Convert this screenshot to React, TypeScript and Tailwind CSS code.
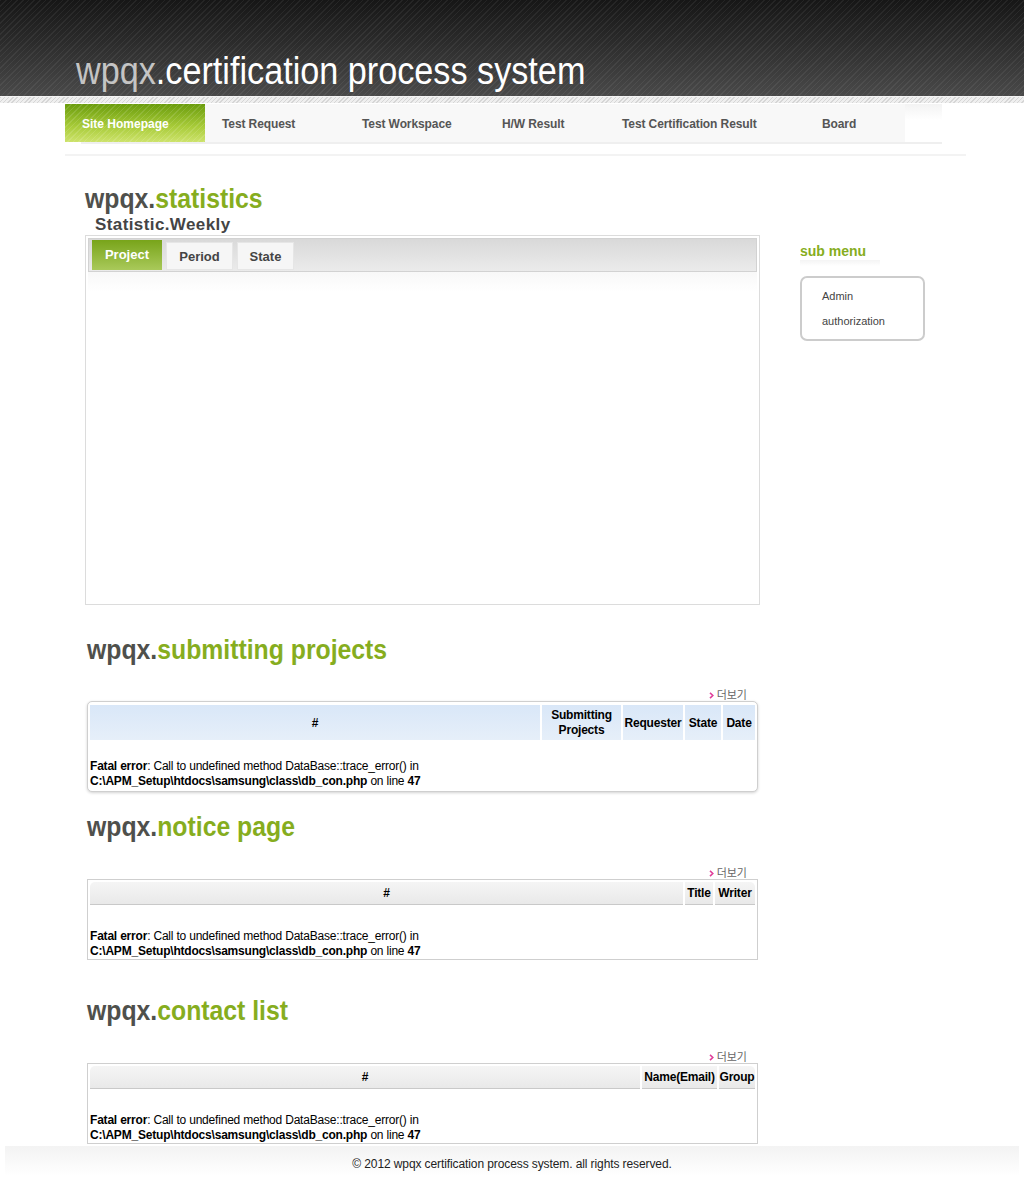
import React from 'react';

const NARROW = "font-['Liberation_Sans',Arial,sans-serif]";

const navItems = [
  { label: 'Test Request', w: 'w-[140px]' },
  { label: 'Test Workspace', w: 'w-[140px]' },
  { label: 'H/W Result', w: 'w-[120px]' },
  { label: 'Test Certification Result', w: 'w-[200px]' },
  { label: 'Board', w: 'w-[100px]' },
];

// section heading: grey prefix + green word
const Heading = ({ word, className = '' }: { word: string; className?: string }) => (
  <h2 className={`${NARROW} text-[28px] font-bold leading-none ${className}`}>
    <span className="inline-block origin-left scale-x-[0.885] whitespace-nowrap">
      <span className="text-[#4f504c]">wpqx.</span>
      <span className="text-[#86ad1e]">{word}</span>
    </span>
  </h2>
);

const More = () => (
  <div className="flex justify-end pr-[13px] h-[13px] items-center">
    <svg width="5" height="7" viewBox="0 0 5 7" className="mr-[3px] mt-[2px]">
      <path d="M1 0.8 L3.8 3.5 L1 6.2" fill="none" stroke="#e0409a" strokeWidth="1.6" />
    </svg>
    <span className="text-[11px] text-[#666] leading-none font-['Noto_Sans_CJK_KR',sans-serif]">더보기</span>
  </div>
);

const FatalError = () => (
  <div className={`${NARROW} text-[12px] leading-[15px] tracking-[-0.2px] text-black`}>
    <div>
      <b>Fatal error</b>: Call to undefined method DataBase::trace_error() in
    </div>
    <div>
      <b>{'C:\\APM_Setup\\htdocs\\samsung\\class\\db_con.php'}</b> on line <b>47</b>
    </div>
  </div>
);

type Col = { label: React.ReactNode; w: string };

const GreyTable = ({ cols }: { cols: Col[] }) => (
  <div className="border border-[#cfcfcf] bg-white h-[81px] pt-[2px] px-[2px]">
    <div className="flex gap-[2px]">
      {cols.map((c, i) => (
        <div
          key={i}
          className={`${c.w} h-[23px] flex items-center justify-center bg-[linear-gradient(#f5f5f5,#e9e9e9)] border-b border-[#c9c9c9] ${NARROW} text-[12px] font-bold tracking-[-0.2px] text-black ${i === cols.length - 1 ? 'rounded-tr-[5px]' : ''} ${i === 0 ? 'rounded-tl-[5px]' : ''}`}
        >
          {c.label}
        </div>
      ))}
    </div>
    <div className="pt-[24px]">
      <FatalError />
    </div>
  </div>
);

const App: React.FC = () => {
  return (
    <div className="w-[1024px] min-h-[1196px] bg-white font-['Liberation_Sans',Arial,sans-serif] text-[#333]">
      {/* header */}
      <header className="h-[96px] bg-[image:repeating-linear-gradient(135deg,rgba(255,255,255,0.06)_0px,rgba(255,255,255,0.06)_1px,transparent_1px,transparent_4px),linear-gradient(#161616,#2c2c2c_45%,#4a4a4a)] flex items-end pl-[76px] pb-[4px]">
        <h1 className={`${NARROW} text-[38px] leading-none pb-[2px]`}>
          <span className="inline-block origin-left scale-x-[0.9] whitespace-nowrap">
            <span className="text-[#c4c4c4]">wpqx</span>
            <span className="text-white">.certification process system</span>
          </span>
        </h1>
      </header>
      <div className="h-[7px] bg-[image:repeating-linear-gradient(135deg,#d6d6d6_0px,#d6d6d6_1px,#efefef_1px,#efefef_3px)] border-t border-[#f4f4f4]" />

      {/* navigation */}
      <nav className="pl-[65px] pt-[1px]">
        <div className="flex w-[877px] h-[38px]">
          <div className="w-[140px] h-full flex items-center pl-[17px] pt-[1px] bg-[image:repeating-linear-gradient(135deg,rgba(255,255,255,0.12)_0px,rgba(255,255,255,0.12)_1px,transparent_1px,transparent_4px),linear-gradient(#6a9c0c,#a9cc3a_60%,#cde36c)] text-white text-[12px] font-bold">
            Site Homepage
          </div>
          {navItems.map((n) => (
            <div
              key={n.label}
              className={`${n.w} h-full flex items-center pl-[17px] pt-[1px] bg-[#f8f8f8] text-[#555] text-[12px] font-bold tracking-[-0.1px]`}
            >
              {n.label}
            </div>
          ))}
          <div className="flex-1 h-[16px] bg-[linear-gradient(#f3f3f3,#fff)]" />
        </div>
        <div className="ml-[16px] w-[861px] h-[2px] bg-[#efefef]" />
        <div className="mt-[10px] w-[901px] h-[2px] bg-[#f3f3f3]" />
      </nav>

      <div className="flex pl-[85px] pt-[29px]">
        {/* main column */}
        <main className="w-[675px]">
          <Heading word="statistics" className="h-[26px]" />
          <div className="pl-[10px] pt-[3px] text-[17px] font-bold text-[#444] leading-[22px] tracking-[0.4px] h-[24px]">
            Statistic.Weekly
          </div>
          <div className="border border-[#dcdcdc] h-[370px] p-[2px]">
            <div className="h-[34px] border border-[#d2d2d2] bg-[linear-gradient(#d9d9d9,#ebebeb)] flex items-end gap-[4px] pl-[3px] pb-[1px]">
              <div className="w-[70px] h-[30px] mb-[1px] self-start mt-[1px] bg-[linear-gradient(#78a41a,#a9c95a)] text-white text-[13px] font-bold flex items-center justify-center">
                Project
              </div>
              <div className="w-[67px] h-[28px] bg-[#f6f6f6] border border-[#e6e6e6] text-[#444] text-[13px] font-bold flex items-center justify-center pt-[2px]">
                Period
              </div>
              <div className="w-[57px] h-[28px] bg-[#f6f6f6] border border-[#e6e6e6] text-[#444] text-[13px] font-bold flex items-center justify-center pt-[2px]">
                State
              </div>
            </div>
            <div className="h-[20px] bg-[linear-gradient(#f8f8f8,#fff)]" />
          </div>

          {/* submitting projects */}
          <div className="pl-[2px] pt-[31px]">
            <Heading word="submitting projects" />
            <div className="pt-[24px]">
              <More />
            </div>
            <div className="w-[671px] h-[91px] border border-[#cfcfcf] rounded-[5px] shadow-[0_1px_3px_rgba(0,0,0,0.18)] bg-white pt-[3px] px-[2px]">
              <div className={`flex gap-[2px] ${NARROW} text-[12px] font-bold tracking-[-0.2px] text-black`}>
                {[
                  { l: '#', w: 'w-[450px]' },
                  { l: <span className="text-center leading-[15px]">Submitting<br />Projects</span>, w: 'w-[79px]' },
                  { l: 'Requester', w: 'w-[60px]' },
                  { l: 'State', w: 'w-[36px]' },
                  { l: 'Date', w: 'w-[32px]' },
                ].map((c, i) => (
                  <div
                    key={i}
                    className={`${c.w} h-[35px] flex items-center justify-center bg-[linear-gradient(#d9e7f8,#e6eff9)]`}
                  >
                    {c.l}
                  </div>
                ))}
              </div>
              <div className="pt-[19px]">
                <FatalError />
              </div>
            </div>
          </div>

          {/* notice page */}
          <div className="pl-[2px] pt-[21px]">
            <Heading word="notice page" />
            <div className="pt-[25px]">
              <More />
            </div>
            <div className="w-[671px]">
              <GreyTable
                cols={[
                  { label: '#', w: 'w-[593px]' },
                  { label: 'Title', w: 'w-[28px]' },
                  { label: 'Writer', w: 'w-[40px]' },
                ]}
              />
            </div>
          </div>

          {/* contact list */}
          <div className="pl-[2px] pt-[37px]">
            <Heading word="contact list" />
            <div className="pt-[25px]">
              <More />
            </div>
            <div className="w-[671px]">
              <GreyTable
                cols={[
                  { label: '#', w: 'w-[550px]' },
                  { label: 'Name(Email)', w: 'w-[75px]' },
                  { label: 'Group', w: 'w-[36px]' },
                ]}
              />
            </div>
          </div>
        </main>

        {/* side menu */}
        <aside className="pl-[40px] pt-[57px]">
          <div className="text-[14px] font-bold text-[#86ad1e] leading-[18px]">sub menu</div>
          <div className="w-[80px] h-[6px] bg-[linear-gradient(#f4f4f4,#fff)]" />
          <div className="mt-[10px] w-[125px] h-[65px] border-2 border-[#cccccc] rounded-[7px] pl-[20px] pt-[6px] text-[11px] text-[#444] leading-[25px]">
            <div>Admin</div>
            <div>authorization</div>
          </div>
        </aside>
      </div>

      {/* footer */}
      <footer className="mx-[5px] mt-[2px] h-[50px] bg-[linear-gradient(#f3f3f3,#fff_60%)] pt-[9px] text-center">
        <p className={`${NARROW} text-[12px] tracking-[-0.1px] text-[#222]`}>© 2012 wpqx certification process system. all rights reserved.</p>
      </footer>
    </div>
  );
};

export default App;
